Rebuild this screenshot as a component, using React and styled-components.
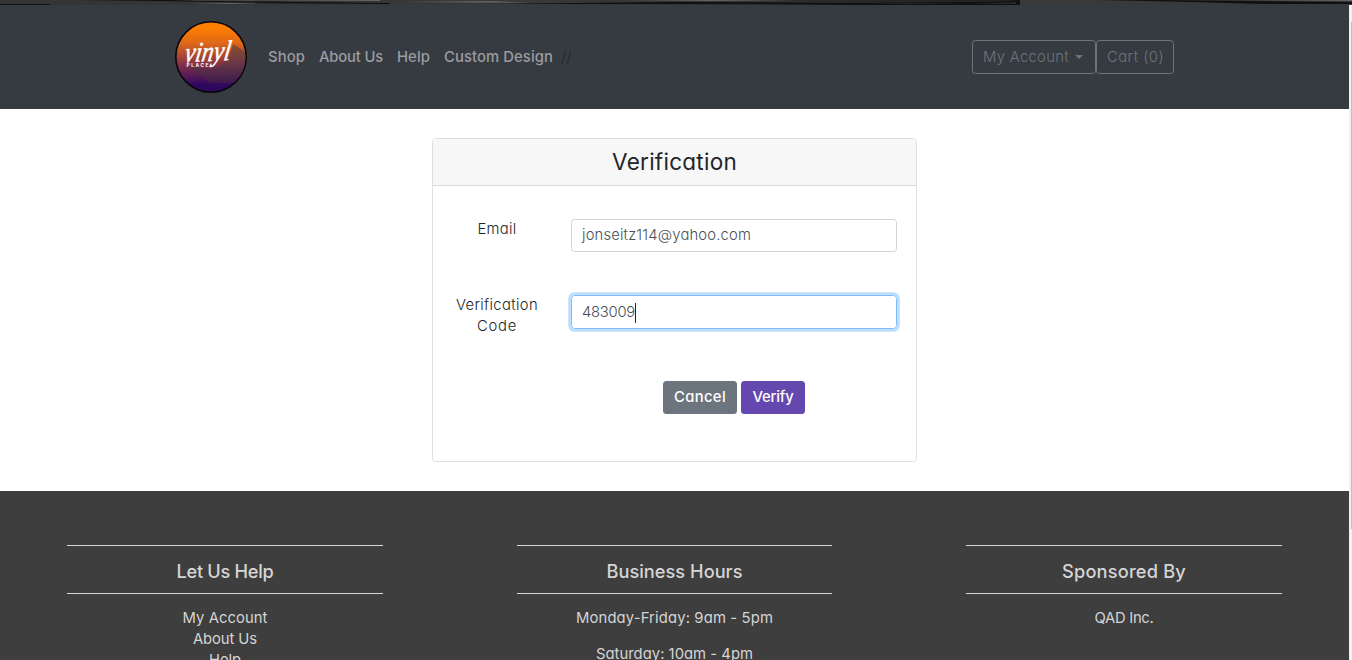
import React, { useLayoutEffect, useRef, useState } from "react";
import styled, { createGlobalStyle } from "styled-components";

const GlobalStyle = createGlobalStyle`
  * { box-sizing: border-box; }
  html { overflow: hidden; }
  body {
    margin: 0;
    background: #fff;
    color: #212529;
    font-family: Inter, "Open Sans", sans-serif;
    font-feature-settings: "cv11";
    font-weight: 350;
    font-size: 14.8px;
    line-height: 21px;
  }
  a { color: inherit; text-decoration: none; }
`;

const Measured = styled.span`
  display: inline-block;
  width: ${(p) => p.$width}px;
  white-space: nowrap;
  text-align: left;
`;

// Tracks its text so that the run fills the given width exactly.
function Label({ width, children }) {
  const ref = useRef(null);
  const [spacing, setSpacing] = useState(0);
  useLayoutEffect(() => {
    const natural = ref.current.getBoundingClientRect().width;
    setSpacing((width - natural) / children.length);
  }, [width, children]);
  return (
    <Measured $width={width}>
      <span ref={ref} style={{ letterSpacing: `${spacing}px` }}>{children}</span>
    </Measured>
  );
}

const Window = styled.div`
  display: grid;
  grid-template-rows: 5px 655px;
  height: 660px;
  overflow: hidden;
`;

const Viewport = styled.div`
  display: grid;
  grid-template-columns: 1349px 3px;
`;

const Page = styled.div`
  display: flex;
  flex-direction: column;
  height: 655px;
  overflow: hidden;
`;

const Scrollbar = styled.div`
  padding: 17px 0 131px 2px;
  background: #f1f1f1;
`;

const Thumb = styled.div`
  height: 507px;
  background: #c1c1c1;
`;

const Navbar = styled.header`
  flex: none;
  display: flex;
  align-items: center;
  height: 104px;
  padding: 0 175px;
  background: #363a41;
`;

const Nav = styled.nav`
  display: flex;
  gap: 14px;
  margin-left: 21px;
  color: #9a9da0;
  font-weight: 450;
`;

const Slashes = styled.span`
  margin-left: -6px;
  color: #212529;
  font-weight: 350;
`;

const Actions = styled.div`
  display: flex;
  margin-left: auto;
`;

const OutlineButton = styled.button`
  display: flex;
  align-items: center;
  height: 34px;
  width: ${(p) => p.$width}px;
  padding: 0 10px;
  border: 1px solid #6c757d;
  border-radius: 3.5px;
  background: transparent;
  color: #6c757d;
  font: inherit;
  font-feature-settings: inherit;
`;

const Caret = styled.span`
  margin-left: 6px;
  border: 4.5px solid transparent;
  border-top-color: currentColor;
  border-bottom: 0;
`;

const Main = styled.main`
  flex: none;
  height: 382px;
  padding: 29px 0 0 432px;
`;

const Card = styled.section`
  width: 485px;
  height: 324px;
  border: 1px solid #dfdfdf;
  border-radius: 3.5px;
`;

const CardTitle = styled.h1`
  height: 47px;
  margin: 0;
  border-bottom: 1px solid #d8d9da;
  background: #f7f7f7;
  color: #212529;
  font-size: 22.5px;
  font-weight: 430;
  line-height: 45px;
  text-align: center;
`;

const Field = styled.div`
  display: grid;
  grid-template-columns: 104px 326px;
  column-gap: 22px;
  height: 76px;
  margin: ${(p) => p.$top}px 0 0 12px;
`;

const FieldName = styled.label`
  display: flex;
  flex-direction: column;
  align-items: center;
`;

const InputBox = styled.div`
  display: flex;
  align-items: center;
  height: ${(p) => (p.$focus ? 34 : 33)}px;
  padding: ${(p) => (p.$focus ? "1px 10px 0 10px" : "0 10px 1px 10px")};
  border: 1px solid ${(p) => (p.$focus ? "#80bdff" : "#ced4da")};
  border-radius: 3.5px;
  box-shadow: ${(p) => (p.$focus ? "0 0 0 2.8px #bfdeff" : "none")};
  color: #495057;
`;

const TextCursor = styled.span`
  width: 1px;
  height: 20px;
  background: #212529;
`;

const ButtonRow = styled.div`
  display: flex;
  gap: 4px;
  margin: 10px 0 0 230px;
`;

const SolidButton = styled.button`
  width: ${(p) => p.$width}px;
  height: 33px;
  padding: 0 0 1px;
  border: 0;
  border-radius: 3.5px;
  background: ${(p) => p.$color};
  color: #fff;
  font: inherit;
  font-feature-settings: inherit;
  font-weight: 480;
`;

const Footer = styled.footer`
  flex: none;
  display: grid;
  grid-template-columns: 316px 315px 316px;
  column-gap: 134px;
  height: 169px;
  padding: 54px 67px 0;
  background: #3e3e3e;
  color: #d5d5d5;
  font-weight: 400;
  overflow: hidden;
`;

const Column = styled.section`
  text-align: center;
`;

const ColumnTitle = styled.h2`
  height: 49px;
  margin: 0 0 14px;
  border: solid #d5d5d5;
  border-width: 1px 0;
  font-size: 18.2px;
  font-weight: 500;
  line-height: 50px;
`;

const Line = styled.div`
  height: 21px;
  margin-bottom: ${(p) => p.$gap || 0}px;
`;

function Photo() {
  return (
    <svg width="1352" height="5" viewBox="0 0 1352 5" preserveAspectRatio="none">
      <defs>
        <linearGradient id="wood" x1="0" x2="1">
          <stop offset="0" stopColor="#353535" />
          <stop offset=".28" stopColor="#343433" />
          <stop offset=".5" stopColor="#3a3a39" />
          <stop offset="1" stopColor="#202020" />
        </linearGradient>
      </defs>
      <rect width="1020" height="5" fill="url(#wood)" />
      <rect x="1020" width="332" height="5" fill="#393939" />
      <path d="M0 4h50v1H0zM80 0h90l30 1 100 1v1l-80-1-60-1zM240 3l60-1 90 1v1l-130-1zM480 4l190-2 180 1 150-1 20-2v5H860l-100-1zM1100 0h60l192 2v2h-90l-70-2z" fill="#101010" />
      <path d="M180 0h200v1zM190 4l40-1 30 1zM400 2l90-1 40 2zM620 1l90-1 90 1zM1250 0h102v1z" fill="#656565" />
      <path d="M860 4l50-1 60 1 46-2v2z" fill="#272727" />
    </svg>
  );
}

function Logo() {
  return (
    <svg width="72" height="72" viewBox="0 0 72 72">
      <defs>
        <linearGradient id="sunset" x1="0" x2="0" y1="0" y2="1">
          <stop offset=".08" stopColor="#ff8000" />
          <stop offset=".3" stopColor="#e06818" />
          <stop offset=".62" stopColor="#812f4a" />
          <stop offset=".9" stopColor="#2e075f" />
        </linearGradient>
        <linearGradient id="shade" x1="0" x2="0" y1="0" y2="1">
          <stop offset="0" stopColor="#8c4f30" />
          <stop offset=".5" stopColor="#693746" />
          <stop offset="1" stopColor="#3d1a4c" />
        </linearGradient>
        <clipPath id="disc"><circle cx="36" cy="36" r="34.4" /></clipPath>
      </defs>
      <circle cx="36" cy="36" r="35.2" fill="url(#sunset)" stroke="#090808" strokeWidth="1.6" />
      <path d="M58 23L72 32V55L62 62H36L12 45L38 48L53 39Z" fill="url(#shade)" clipPath="url(#disc)" />
      <text
        x="9"
        y="40"
        transform="rotate(-3 35 36) skewX(-12) translate(8 0)"
        fill="#fff"
        stroke="#fff"
        strokeWidth=".5"
        fontFamily="Liberation Serif, serif"
        fontSize="28"
        fontStyle="italic"
        textLength="46"
        lengthAdjust="spacingAndGlyphs"
      >
        vinyl
      </text>
      <text x="11.5" y="45.5" fill="#fff" fontFamily="Inter, sans-serif" fontSize="4.8" fontWeight="700" textLength="22">PLACE</text>
    </svg>
  );
}

export default function App() {
  return (
    <>
      <GlobalStyle />
      <Window>
        <Photo />
        <Viewport>
          <Page>
            <Navbar>
              <Logo />
              <Nav>
                <a href="#shop"><Label width={37}>Shop</Label></a>
                <a href="#about"><Label width={64}>About Us</Label></a>
                <a href="#help"><Label width={33}>Help</Label></a>
                <a href="#design"><Label width={109}>Custom Design</Label></a>
                <Slashes><Label width={11}>//</Label></Slashes>
              </Nav>
              <Actions>
                <OutlineButton $width={124}><Label width={86}>My Account</Label><Caret /></OutlineButton>
                <OutlineButton $width={78}><Label width={57}>Cart (0)</Label></OutlineButton>
              </Actions>
            </Navbar>
            <Main>
              <Card>
                <CardTitle><Label width={125}>Verification</Label></CardTitle>
                <Field $top={33}>
                  <FieldName><Label width={39}>Email</Label></FieldName>
                  <InputBox><Label width={169}>jonseitz114@yahoo.com</Label></InputBox>
                </Field>
                <Field $top={0}>
                  <FieldName>
                    <Label width={82}>Verification</Label>
                    <Label width={40}>Code</Label>
                  </FieldName>
                  <InputBox $focus><Label width={53}>483009</Label><TextCursor /></InputBox>
                </Field>
                <ButtonRow>
                  <SolidButton $width={74} $color="#6c757d"><Label width={52}>Cancel</Label></SolidButton>
                  <SolidButton $width={64} $color="#6448b0"><Label width={41}>Verify</Label></SolidButton>
                </ButtonRow>
              </Card>
            </Main>
            <Footer>
              <Column>
                <ColumnTitle><Label width={97}>Let Us Help</Label></ColumnTitle>
                <Line><Label width={85}>My Account</Label></Line>
                <Line><Label width={64}>About Us</Label></Line>
                <Line><Label width={32}>Help</Label></Line>
              </Column>
              <Column>
                <ColumnTitle><Label width={136}>Business Hours</Label></ColumnTitle>
                <Line $gap={15}><Label width={197}>Monday-Friday: 9am - 5pm</Label></Line>
                <Line><Label width={157}>Saturday: 10am - 4pm</Label></Line>
              </Column>
              <Column>
                <ColumnTitle><Label width={124}>Sponsored By</Label></ColumnTitle>
                <Line><Label width={59}>QAD Inc.</Label></Line>
              </Column>
            </Footer>
          </Page>
          <Scrollbar><Thumb /></Scrollbar>
        </Viewport>
      </Window>
    </>
  );
}
